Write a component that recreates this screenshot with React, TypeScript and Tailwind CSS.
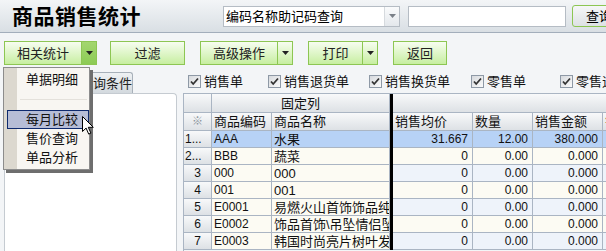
import React from 'react';

const font = "font-['Liberation_Sans','Noto_Sans_CJK_SC',sans-serif]";

const rows = [
  { no: '1...', code: 'AAA', name: '水果', price: '31.667', qty: '12.00', amt: '380.000' },
  { no: '2...', code: 'BBB', name: '蔬菜', price: '0', qty: '0.00', amt: '0.000' },
  { no: '3', code: '000', name: '000', price: '0', qty: '0.00', amt: '0.000' },
  { no: '4', code: '001', name: '001', price: '0', qty: '0.00', amt: '0.000' },
  { no: '5', code: 'E0001', name: '易燃火山首饰饰品纯银', price: '0', qty: '0.00', amt: '0.000' },
  { no: '6', code: 'E0002', name: '饰品首饰\\吊坠情侣坠.', price: '0', qty: '0.00', amt: '0.000' },
  { no: '7', code: 'E0003', name: '韩国时尚亮片树叶发簪', price: '0', qty: '0.00', amt: '0.000' },
];

function Caret({ color = '#222' }: { color?: string }) {
  return (
    <svg width="7" height="4" viewBox="0 0 7 4">
      <path d="M0 0h7L3.5 4z" fill={color} />
    </svg>
  );
}

function GreenButton({ label, width, arrow, pressed }: { label: string; width: number; arrow?: boolean; pressed?: boolean }) {
  return (
    <div className="flex h-[24px] shrink-0">
      <div
        className="flex h-full items-center justify-center border border-[#8dc653] bg-gradient-to-b from-[#f7fdf0] to-[#c7eea0] text-[13px] leading-none text-[#222]"
        style={{ width }}
      >
        {label}
      </div>
      {arrow && (
        <div
          className={`flex h-full w-[15px] items-center justify-center border border-l-0 border-[#8dc653] ${
            pressed ? 'bg-gradient-to-b from-[#a3d66f] to-[#8ccb55]' : 'bg-gradient-to-b from-[#f7fdf0] to-[#c7eea0]'
          }`}
        >
          <Caret />
        </div>
      )}
    </div>
  );
}

function Check({ label, w }: { label: string; w: number }) {
  return (
    <div className="flex shrink-0 items-center gap-[3px]" style={{ width: w }}>
      <div className="flex h-[13px] w-[13px] items-center justify-center border border-[#8e99a6] bg-gradient-to-br from-[#d6d9dd] to-[#fbfbfb]">
        <svg width="9" height="9" viewBox="0 0 9 9">
          <path d="M1 4.5l2.2 2.5L8 1.5" stroke="#333" strokeWidth="1.8" fill="none" />
        </svg>
      </div>
      <span className="whitespace-nowrap text-[13px] leading-none text-[#111]">{label}</span>
    </div>
  );
}

const hdr = 'bg-gradient-to-b from-[#f8f9fa] to-[#dde1e5]';
const line = 'border-r border-b border-[#aab5c3]';

export default function App() {
  return (
    <div className={`relative h-[251px] w-[606px] overflow-hidden bg-[#f3f5f7] ${font}`}>
      {/* Header */}
      <div className="flex h-[33px] items-center border-b border-[#a3aebb] bg-gradient-to-b from-[#f3f5f7] to-[#d9dfe4]">
        <div className="ml-[12px] w-[211px] shrink-0 text-[21px] font-bold leading-none tracking-[0.5px] text-black">商品销售统计</div>
        <div className="flex h-[21px] w-[177px] shrink-0 items-center border border-[#b5bcc4] bg-white">
          <span className="flex-1 pl-[2px] text-[13px] leading-none text-black">编码名称助记码查询</span>
          <div className="flex h-full w-[15px] items-center justify-center border-l border-[#d6dade] bg-gradient-to-b from-[#fafbfc] to-[#e4e8ec]">
            <Caret color="#7a8088" />
          </div>
        </div>
        <div className="ml-[8px] h-[21px] w-[158px] shrink-0 border border-[#b5bcc4] bg-white" />
        <div className="ml-[6px] flex h-[22px] w-[60px] shrink-0 items-center rounded-[3px] border border-[#8dc653] bg-gradient-to-b from-[#f6f7f8] to-[#dde1e4] pl-[13px] text-[13px] leading-none text-black">
          查询
        </div>
      </div>

      {/* Toolbar */}
      <div className="flex h-[35px] items-start pl-[4px] pt-[8px]">
        <GreenButton label="相关统计" width={78} arrow pressed />
        <div className="ml-[13px]">
          <GreenButton label="过滤" width={75} />
        </div>
        <div className="ml-[15px]">
          <GreenButton label="高级操作" width={78} arrow />
        </div>
        <div className="ml-[15px]">
          <GreenButton label="打印" width={55} arrow />
        </div>
        <div className="ml-[15px]">
          <GreenButton label="返回" width={54} />
        </div>
      </div>

      {/* Main */}
      <div className="flex h-[183px]">
        {/* Left panel */}
        <div className="flex w-[177px] shrink-0 flex-col pl-[4px] pt-[4px]">
          <div className="flex h-[21px] items-end">
            <div className="ml-[62px] flex h-[21px] w-[67px] items-center rounded-t-[3px] border border-b-0 border-[#a7b0b9] bg-gradient-to-b from-[#eef1f3] to-[#d3d9de] pl-[13px] text-[13px] leading-none text-[#222]">
              查询条件
            </div>
          </div>
          <div className="flex-1 rounded-tr-[4px] border border-b-0 border-[#c5cbd1] bg-white" />
        </div>

        {/* Right area */}
        <div className="ml-[6px] flex min-w-0 flex-1 flex-col">
          <div className="flex h-[25px] items-center pl-[5px] pt-[1px]">
            <Check label="销售单" w={80} />
            <Check label="销售退货单" w={101} />
            <Check label="销售换货单" w={102} />
            <Check label="零售单" w={89} />
            <Check label="零售退货单" w={100} />
          </div>

          {/* Grid */}
          <div className="flex-1 overflow-hidden border-l border-t border-[#aab5c3] text-[13px] leading-none text-[#111]">
            {/* header row 1 */}
            <div className="flex h-[19px]">
              <div className={`w-[28px] shrink-0 ${hdr} ${line}`} />
              <div className={`flex w-[178px] shrink-0 items-center justify-center ${hdr} ${line}`}>固定列</div>
              <div className="w-[3px] shrink-0 bg-black" />
              <div className={`w-[300px] shrink-0 ${hdr} border-b border-[#aab5c3]`} />
            </div>
            {/* header row 2 */}
            <div className="flex h-[18px]">
              <div className={`flex w-[28px] shrink-0 items-center justify-center text-[11px] text-[#8a939c] ${hdr} ${line}`}>※</div>
              <div className={`flex w-[60px] shrink-0 items-center pl-[2px] ${hdr} ${line}`}>商品编码</div>
              <div className={`flex w-[118px] shrink-0 items-center pl-[2px] ${hdr} ${line}`}>商品名称</div>
              <div className="w-[3px] shrink-0 bg-black" />
              <div className={`flex w-[80px] shrink-0 items-center pl-[2px] ${hdr} ${line}`}>销售均价</div>
              <div className={`flex w-[60px] shrink-0 items-center pl-[2px] ${hdr} ${line}`}>数量</div>
              <div className={`flex w-[70px] shrink-0 items-center pl-[2px] ${hdr} ${line}`}>销售金额</div>
              <div className={`flex w-[60px] shrink-0 items-center pl-[2px] ${hdr} ${line}`}>销</div>
            </div>
            {rows.map((r, i) => {
              const sel = i === 0;
              const fixedBg = sel ? 'bg-[#b7d2f6]' : 'bg-[#fcfbf3]';
              const scrollBg = sel ? 'bg-[#b7d2f6]' : i % 2 === 1 ? 'bg-[#fcfbf3]' : 'bg-[#eef3fa]';
              return (
                <div key={i} className="flex h-[17px]">
                  <div
                    className={`flex w-[28px] shrink-0 items-center ${r.no.length > 1 ? 'justify-start pl-[1px]' : 'justify-center'} text-[12px] ${hdr} ${line}`}
                  >
                    {r.no}
                  </div>
                  <div className={`flex w-[60px] shrink-0 items-center pl-[2px] text-[12px] ${fixedBg} ${line}`}>{r.code}</div>
                  <div className={`flex w-[118px] shrink-0 items-center overflow-hidden whitespace-nowrap pl-[2px] ${fixedBg} ${line}`}>
                    {r.name}
                  </div>
                  <div className="w-[3px] shrink-0 bg-black" />
                  <div className={`flex w-[80px] shrink-0 items-center justify-end pr-[4px] text-[12px] ${scrollBg} ${line}`}>{r.price}</div>
                  <div className={`flex w-[60px] shrink-0 items-center justify-end pr-[4px] text-[12px] ${scrollBg} ${line}`}>{r.qty}</div>
                  <div className={`flex w-[70px] shrink-0 items-center justify-end pr-[4px] text-[12px] ${scrollBg} ${line}`}>{r.amt}</div>
                  <div className={`w-[60px] shrink-0 ${scrollBg} ${line}`} />
                </div>
              );
            })}
          </div>
        </div>
      </div>

      {/* Dropdown menu */}
      <div className="absolute left-[3px] top-[67px] w-[87px] border border-[#8c8c8c] bg-[#f8f6f2] shadow-[3px_3px_0_#6e6e6e] text-[13px] leading-none text-[#111]">
        <div className="relative py-[2px]">
          <div className="absolute bottom-0 left-0 top-0 w-[13px] bg-[#dcd8cf]" />
          <div className="relative flex h-[19px] items-center pl-[22px]">单据明细</div>
          <div className="relative h-[21px]">
            <div className="absolute left-[16px] right-[2px] top-[10px] h-px bg-[#e4e1db]" />
          </div>
          <div className="relative ml-[3px] mr-0 flex h-[19px] items-center border border-[#0e2a6e] bg-[#b6bdd6] pl-[18px]">每月比较</div>
          <div className="relative flex h-[19px] items-center pl-[22px]">售价查询</div>
          <div className="relative flex h-[19px] items-center pl-[22px]">单品分析</div>
        </div>
      </div>

      {/* Mouse cursor */}
      <svg className="absolute left-[82px] top-[116px]" width="12" height="19" viewBox="0 0 12 19">
        <path d="M0.5 0.5v15l3.6-3.4 2.6 6 2.2-1-2.6-5.8h5z" fill="#fff" stroke="#000" strokeWidth="1" />
      </svg>
    </div>
  );
}
